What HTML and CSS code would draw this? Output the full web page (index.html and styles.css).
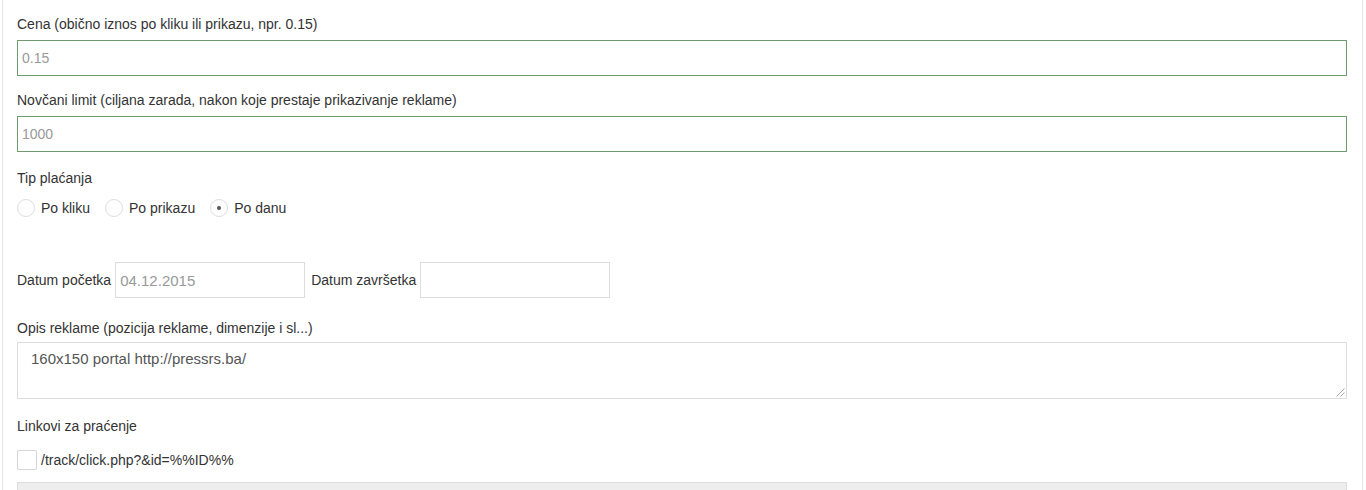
FILE: index.html
```html
<!DOCTYPE html>
<html>
<head>
<meta charset="utf-8">
<link rel="stylesheet" href="styles.css">
</head>
<body>
<div class="panel">
  <div class="group">
    <label class="lbl">Cena (obično iznos po kliku ili prikazu, npr. 0.15)</label>
    <div class="input green">0.15</div>
  </div>
  <div class="group">
    <label class="lbl">Novčani limit (ciljana zarada, nakon koje prestaje prikazivanje reklame)</label>
    <div class="input green">1000</div>
  </div>
  <div class="group pay">
    <label class="lbl">Tip plaćanja</label>
    <div class="radios">
      <span class="radio"><span class="circle"></span>Po kliku</span>
      <span class="radio"><span class="circle"></span>Po prikazu</span>
      <span class="radio"><span class="circle checked"></span>Po danu</span>
    </div>
  </div>
  <div class="dates">
    <span class="dlbl">Datum početka</span>
    <div class="input date">04.12.2015</div>
    <span class="dlbl">Datum završetka</span>
    <div class="input date"></div>
  </div>
  <div class="group desc">
    <label class="lbl">Opis reklame (pozicija reklame, dimenzije i sl...)</label>
    <div class="textarea">160x150 portal http://pressrs.ba/
      <svg class="grip" width="9" height="9" viewBox="0 0 9 9"><path d="M8.5 0.5L0.5 8.5M8.5 4.5L4.5 8.5" stroke="#aaa" stroke-width="1"/></svg>
    </div>
  </div>
  <div class="group links">
    <label class="lbl">Linkovi za praćenje</label>
    <div class="check"><span class="box"></span>/track/click.php?&amp;id=%%ID%%</div>
    <div class="graybar"></div>
  </div>
</div>
</body>
</html>
```
FILE: styles.css
```css
html, body { margin: 0; padding: 0; background: #fff; }
body {
  font-family: "Liberation Sans", Arial, sans-serif;
  color: #333;
  height: 490px;
  overflow: hidden;
}
.panel {
  margin-left: 2px;
  width: 1361px;
  border-left: 1px solid #e6e6e6;
  border-right: 1px solid #e6e6e6;
  padding: 14px 15px 0 14px;
  box-sizing: border-box;
  height: 490px;
  background: #fff;
}
.group { margin-bottom: 14px; }
.lbl {
  display: block;
  font-size: 14px;
  line-height: 20px;
  margin-bottom: 6px;
  color: #333;
}
.input {
  box-sizing: border-box;
  height: 36px;
  border: 1px solid #ddd;
  font-size: 14px;
  color: #999;
  padding: 0 4px;
  display: flex;
  align-items: center;
}
.input.green { border-color: #6f9c6f; }
.pay { margin-top: 16px; margin-bottom: 44px; }
.pay .lbl { margin-bottom: 10px; }
.radios { display: flex; align-items: center; height: 20px; font-size: 14px; }
.radio { display: flex; align-items: center; margin-right: 15px; }
.circle {
  width: 18px; height: 18px;
  border: 1px solid #ddd;
  border-radius: 50%;
  margin-right: 6px;
  box-sizing: border-box;
  display: flex; align-items: center; justify-content: center;
  background: #fff;
}
.circle.checked::after {
  content: "";
  width: 4px; height: 4px; border-radius: 50%;
  background: #555;
}
.dates { display: flex; align-items: center; margin-bottom: 20px; font-size: 14px; }
.dlbl { margin-right: 4px; }
.input.date { width: 190px; margin-right: 6px; font-size: 15px; height: 36px; }
.desc .lbl { margin-bottom: 4px; }
.desc { margin-bottom: 17px; }
.textarea {
  position: relative;
  box-sizing: border-box;
  height: 57px;
  border: 1px solid #ddd;
  padding: 6px 13px;
  font-size: 15px;
  line-height: 20px;
  color: #555;
}
.grip { position: absolute; right: 1px; bottom: 1px; }
.links .lbl { margin-bottom: 14px; }
.check { display: flex; align-items: center; font-size: 14px; height: 20px; }
.box {
  width: 20px; height: 20px; box-sizing: border-box;
  border: 1px solid #d5d5d5; border-radius: 2px; margin-right: 4px;
}
.graybar {
  margin-top: 12px;
  height: 20px;
  background: #eee;
  border: 1px solid #ddd;
}
```
